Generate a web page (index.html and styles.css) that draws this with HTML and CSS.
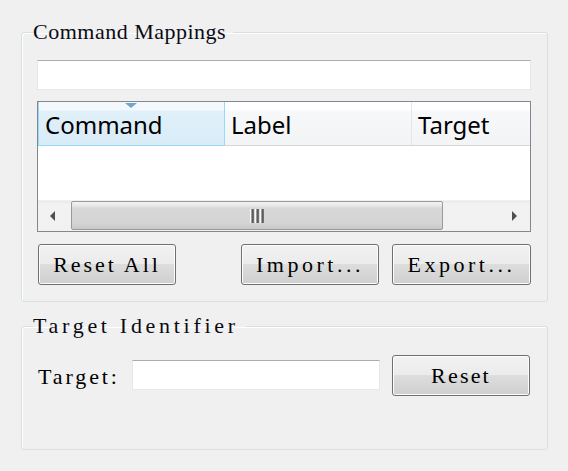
FILE: index.html
```html
<!DOCTYPE html>
<html>
<head>
<meta charset="utf-8">
<link rel="stylesheet" href="styles.css">
</head>
<body>
<div class="page">
  <fieldset class="group group-mappings">
    <legend class="group-title title-mappings">Command Mappings</legend>
    <div class="group-body">
      <div class="textbox filter"></div>
      <div class="table">
        <div class="table-head">
          <div class="col col-command is-sorted"><span class="sort-arrow"></span>Command</div>
          <div class="col col-label">Label</div>
          <div class="col col-target">Target</div>
        </div>
        <div class="table-rows"></div>
        <div class="hscroll">
          <div class="scroll-btn"><span class="arrow-left"></span></div>
          <div class="scroll-thumb"><span class="grip"><i></i><i></i><i></i></span></div>
          <div class="scroll-rest"><span class="arrow-right"></span></div>
        </div>
      </div>
      <div class="button-row">
        <button class="btn">Reset All</button>
        <div class="button-spacer"></div>
        <button class="btn btn-wide">Import...</button>
        <button class="btn btn-wide btn-last">Export...</button>
      </div>
    </div>
  </fieldset>
  <fieldset class="group group-target">
    <legend class="group-title title-target">Target Identifier</legend>
    <div class="group-body target-row">
      <span class="field-label">Target:</span>
      <div class="textbox target-input"></div>
      <button class="btn btn-reset">Reset</button>
    </div>
  </fieldset>
</div>
</body>
</html>
```

FILE: styles.css
```css
html, body {
  margin: 0;
  padding: 0;
  background: #f0f0f0;
}
.page {
  padding: 22px 0 0 21px;
  width: 527px;
  font-family: "Liberation Serif", serif;
  font-size: 22px;
  color: #000;
}
.group {
  margin: 0;
  padding: 0;
  border: 1px solid #d5dfe5;
  border-radius: 3px;
  box-shadow: inset 1px 1px 0 #fff;
  min-width: 0;
}
.group-title {
  margin-left: 11px;
  padding: 0 7px 0 0;
  height: 20px;
  line-height: 20px;
  color: #0a0a14;
  white-space: nowrap;
}
.title-mappings {
  letter-spacing: 0.5px;
}
.title-target {
  letter-spacing: 3.7px;
}
.group-body {
  padding: 18px 16px 16px 15px;
}
.group-target {
  margin-top: 14px;
  height: 134px;
  box-sizing: border-box;
}
.textbox {
  box-sizing: border-box;
  background: #fff;
  border: 1px solid #e3e9ef;
  border-top-color: #abadb3;
  height: 30px;
}
.filter {
  width: 100%;
}
.table {
  margin-top: 11px;
  border: 1px solid #828790;
  background: #fff;
  height: 131px;
  box-sizing: border-box;
  display: flex;
  flex-direction: column;
  overflow: hidden;
}
.table-head {
  display: flex;
  height: 44px;
  box-sizing: border-box;
  border-bottom: 1px solid #d5d5d5;
  font-family: "Noto Sans", sans-serif;
  font-size: 24px;
  flex: none;
}
.col {
  position: relative;
  box-sizing: border-box;
  padding: 3px 0 0 6px;
  line-height: 40px;
  background: linear-gradient(#ffffff 0, #ffffff 8px, #f7f8fa 9px, #f3f4f6 100%);
  border-right: 1px solid #e3e5e8;
  color: #000;
  white-space: nowrap;
  overflow: hidden;
}
.col-command { width: 187px; }
.col-label { width: 187px; }
.col-target { flex: 1; border-right: none; }
.col.is-sorted {
  background: linear-gradient(#f2f8fc 0, #f2f8fc 8px, #e1f0f9 9px, #d8ecf8 100%);
  border: 1px solid #96d9f9;
  border-top: none;
  margin-bottom: -1px;
  height: 44px;
}
.sort-arrow {
  position: absolute;
  left: 86px;
  top: 1px;
  width: 0;
  height: 0;
  border-left: 6px solid transparent;
  border-right: 6px solid transparent;
  border-top: 5px solid #6fa6c9;
}
.table-rows {
  flex: 1;
  background: #fff;
}
.hscroll {
  flex: none;
  height: 30px;
  display: flex;
  background: linear-gradient(#e8e8e8, #f2f2f2 3px, #f1f1f1);
  border-top: 1px solid #f0f0f0;
}
.scroll-btn {
  width: 33px;
  display: flex;
  align-items: center;
  padding-left: 12px;
  box-sizing: border-box;
}
.arrow-left {
  width: 0; height: 0;
  border-top: 5px solid transparent;
  border-bottom: 5px solid transparent;
  border-right: 5px solid #505050;
}
.scroll-thumb {
  width: 372px;
  box-sizing: border-box;
  margin: 0 0 1px 0;
  border: 1px solid #9a9a9a;
  border-radius: 2px;
  background: linear-gradient(#f3f3f3 0, #e6e6e6 4px, #d8d8d8 6px, #d4d4d4 80%, #c8c8c8 100%);
  display: flex;
  align-items: center;
  justify-content: center;
}
.grip {
  display: flex;
  gap: 1px;
}
.grip i {
  display: block;
  width: 4px;
  height: 14px;
  box-sizing: border-box;
  border-left: 1px solid #fafafa;
  background: linear-gradient(90deg, #f0f0f0 0, #555 30%, #777 100%);
}
.scroll-rest {
  flex: 1;
  display: flex;
  align-items: center;
  justify-content: flex-end;
  padding-right: 13px;
}
.arrow-right {
  width: 0; height: 0;
  border-top: 5px solid transparent;
  border-bottom: 5px solid transparent;
  border-left: 5px solid #505050;
}
.button-row {
  display: flex;
  margin-top: 12px;
  gap: 13px;
  padding-left: 1px;
}
.button-spacer {
  flex: 1;
}
.btn {
  width: 138px;
  height: 41px;
  padding: 0;
  margin: 0;
  border: 1px solid #707070;
  border-radius: 3px;
  background: linear-gradient(#f2f2f2 0, #ebebeb 50%, #dddddd 50%, #cfcfcf 100%);
  box-shadow: inset 0 0 0 1px #fcfcfc;
  font-family: "Liberation Serif", serif;
  font-size: 22px;
  letter-spacing: 2.9px;
  color: #000;
  text-align: center;
}
.btn-wide {
  letter-spacing: 3.5px;
}
.btn-last {
  width: 139px;
}
.target-row {
  display: flex;
  align-items: flex-start;
  padding-top: 19px;
  padding-left: 16px;
}
.field-label {
  width: 94px;
  margin-top: 7px;
  line-height: 30px;
  letter-spacing: 2.9px;
}
.target-input {
  width: 248px;
  margin-top: 5px;
}
.btn-reset {
  margin-left: 12px;
  letter-spacing: 2.2px;
}
```
